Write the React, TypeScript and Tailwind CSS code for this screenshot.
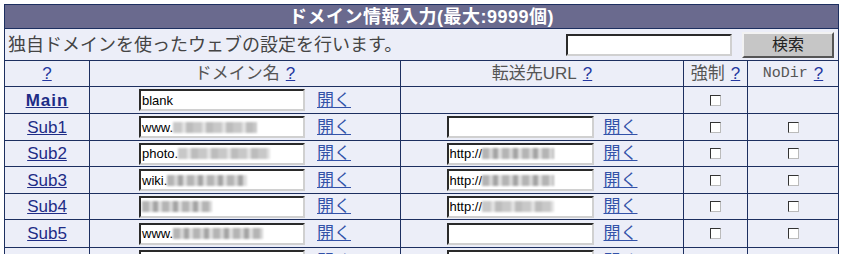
import type { ReactNode } from 'react'

/**
 * Domain settings table — legacy admin panel look (navy grid lines, lavender cells).
 * Parts of the domains are redacted in the source, drawn here as soft grey blur blocks.
 */

const jp = "font-['Liberation_Sans','Noto_Sans_CJK_JP',sans-serif]"

interface Row {
  name: string
  domain: ReactNode
  url: ReactNode | null
  noDir: boolean
  h: string
}

function Blur({ w, tone = 'mid' }: { w: number; tone?: 'mid' | 'light' }) {
  return (
    <span
      style={{ width: w }}
      className={
        tone === 'mid'
          ? 'inline-block h-[11px] align-middle bg-[repeating-linear-gradient(90deg,#b4b4b4_0_7px,#d6d6d6_7px_11px,#a4a4a4_11px_16px,#dedede_16px_20px)] blur-[1px]'
          : 'inline-block h-[11px] align-middle bg-[repeating-linear-gradient(90deg,#c8c8c8_0_9px,#e2e2e2_9px_13px,#bcbcbc_13px_20px)] blur-[1px]'
      }
    />
  )
}

function Field({ children, width }: { children?: ReactNode; width: string }) {
  return (
    <div
      className={`flex h-[22px] items-center overflow-hidden whitespace-nowrap border-2 border-t-[#2a2a2a] border-l-[#2a2a2a] border-r-[#d0d0d0] border-b-[#d0d0d0] bg-white pl-[1px] font-['Liberation_Sans',sans-serif] text-[13px] leading-none text-black ${width}`}
    >
      {children}
    </div>
  )
}

function OpenLink() {
  return <a className={`${jp} text-[17px] leading-none text-[#3352a8] underline`}>開く</a>
}

function Check() {
  return (
    <span className="inline-block h-[11px] w-[11px] border border-t-[#333] border-l-[#333] border-r-[#bbb] border-b-[#bbb] bg-white" />
  )
}

function Help() {
  return <a className="text-[#2538a0] underline">?</a>
}

const ROWS: Row[] = [
  { name: 'Main', domain: 'blank', url: null, noDir: false, h: 'h-[26px]' },
  {
    name: 'Sub1',
    domain: (
      <>
        www.
        <Blur w={84} tone="light" />
      </>
    ),
    url: '',
    noDir: true,
    h: 'h-[26px]',
  },
  {
    name: 'Sub2',
    domain: (
      <>
        photo.
        <Blur w={92} tone="light" />
      </>
    ),
    url: (
      <>
        http://
        <Blur w={72} />
      </>
    ),
    noDir: true,
    h: 'h-[25px]',
  },
  {
    name: 'Sub3',
    domain: (
      <>
        wiki.
        <Blur w={80} />
      </>
    ),
    url: (
      <>
        http://
        <Blur w={72} />
      </>
    ),
    noDir: true,
    h: 'h-[26px]',
  },
  {
    name: 'Sub4',
    domain: <Blur w={70} />,
    url: (
      <>
        http://
        <Blur w={72} tone="light" />
      </>
    ),
    noDir: true,
    h: 'h-[25px]',
  },
  {
    name: 'Sub5',
    domain: (
      <>
        www.
        <Blur w={90} />
      </>
    ),
    url: '',
    noDir: true,
    h: 'h-[27px]',
  },
  { name: '', domain: '', url: '', noDir: true, h: 'h-[26px]' },
]

const cell = 'flex items-center justify-center bg-[#eceef8]'

export default function App() {
  return (
    <div className="min-h-screen bg-white pl-[4px] pt-[4px]">
      <div className="grid w-[835px] grid-cols-[84px_310px_282px_63px_90px] gap-px bg-[#1d2f60] p-px">
        {/* title bar */}
        <div
          className={`col-span-5 flex h-[23px] items-center justify-center bg-[#6a6a8e] ${jp} text-[18px] font-bold leading-none tracking-[0.5px] text-white`}
        >
          ドメイン情報入力(最大:9999個)
        </div>

        {/* description + search */}
        <div className="col-span-5 flex h-[31px] items-center bg-[#eceef8] pl-[3px] pr-[4px]">
          <p className={`${jp} flex-1 text-[18px] leading-none text-[#444]`}>
            独自ドメインを使ったウェブの設定を行います。
          </p>
          <Field width="w-[166px]" />
          <button
            type="button"
            className={`ml-[10px] h-[26px] w-[92px] border-2 border-t-[#f2f2f2] border-l-[#f2f2f2] border-r-[#555] border-b-[#555] bg-[#c6c6c6] ${jp} text-[16px] leading-none text-[#222]`}
          >
            検索
          </button>
        </div>

        {/* header */}
        <div className={`${cell} h-[25px] ${jp} text-[17px] leading-none text-[#555]`}>
          <Help />
        </div>
        <div className={`${cell} gap-[6px] ${jp} text-[17px] leading-none text-[#555]`}>
          ドメイン名 <Help />
        </div>
        <div className={`${cell} gap-[6px] ${jp} text-[17px] leading-none text-[#555]`}>
          転送先URL <Help />
        </div>
        <div className={`${cell} gap-[6px] ${jp} text-[17px] leading-none text-[#555]`}>
          強制 <Help />
        </div>
        <div className={`${cell} gap-[6px] ${jp} text-[17px] leading-none text-[#555]`}>
          <span className="font-['Liberation_Mono',monospace] text-[15px]">NoDir</span> <Help />
        </div>

        {ROWS.map((r, i) => (
          <div key={i} className="contents">
            <div className={`${cell} ${r.h}`}>
              <a
                className={`font-['Liberation_Sans',sans-serif] text-[17px] leading-none text-[#1e2c86] underline ${
                  r.name === 'Main' ? 'font-bold tracking-[1px]' : ''
                }`}
              >
                {r.name}
              </a>
            </div>
            <div className={`${cell} gap-[12px]`}>
              <Field width="w-[166px]">{r.domain}</Field>
              <OpenLink />
            </div>
            <div className={`${cell} gap-[10px]`}>
              {r.url !== null && (
                <>
                  <Field width="w-[147px]">{r.url}</Field>
                  <OpenLink />
                </>
              )}
            </div>
            <div className={cell}>
              <Check />
            </div>
            <div className={cell}>{r.noDir && <Check />}</div>
          </div>
        ))}
      </div>
    </div>
  )
}
